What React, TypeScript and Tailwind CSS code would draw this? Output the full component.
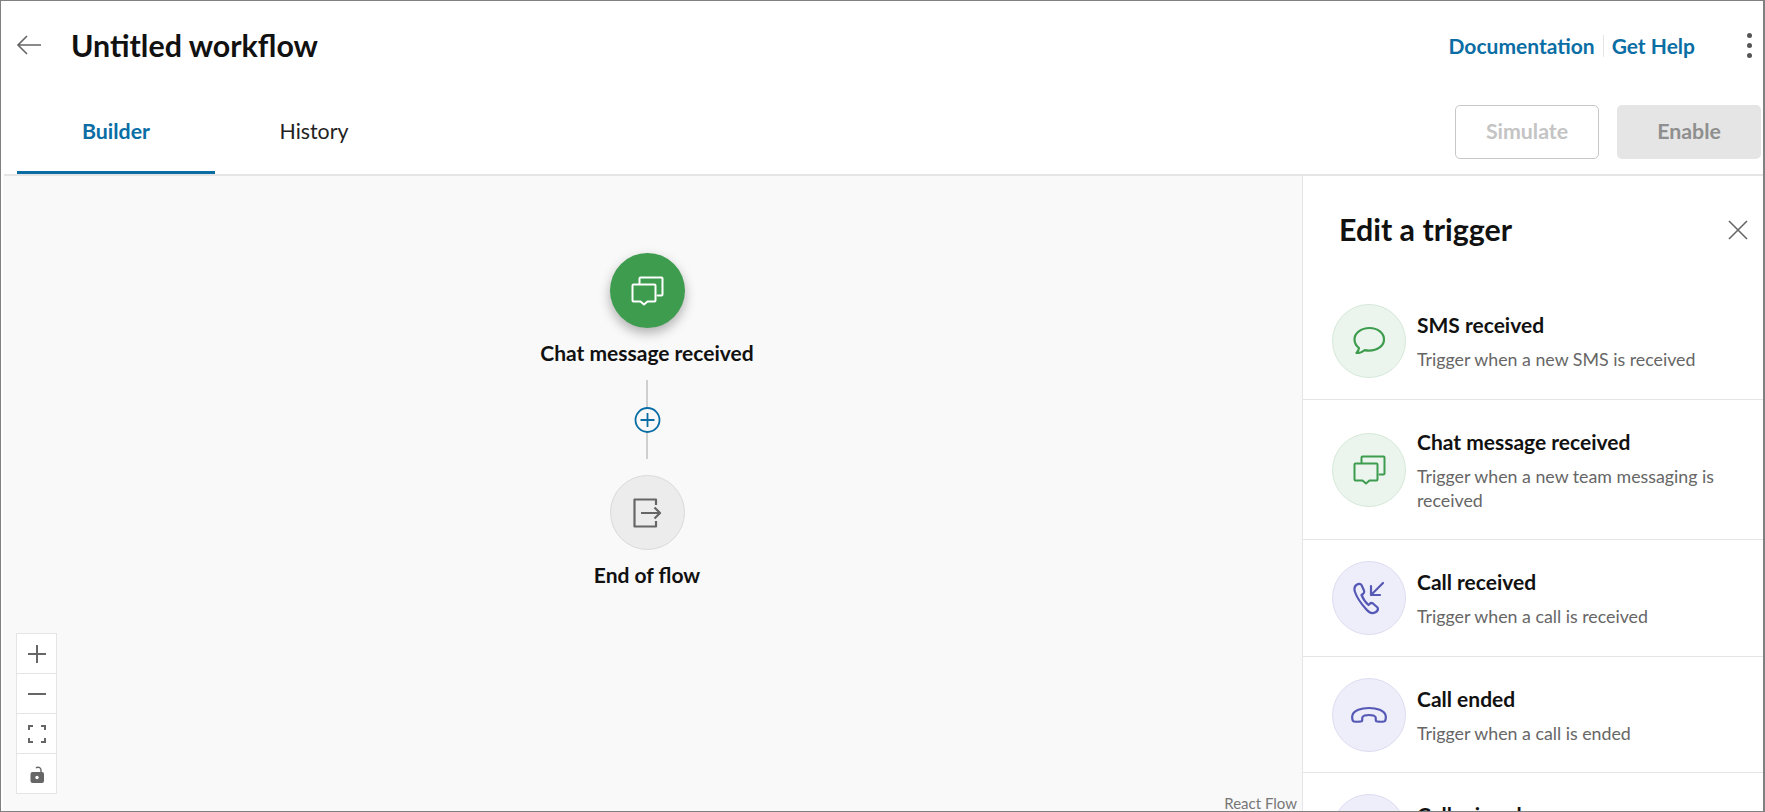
import React from "react";

function ChatsIcon({ color }: { color: string }) {
  return (
    <svg width="33" height="30" viewBox="0 0 33 30" fill="none" stroke={color} strokeWidth="2" strokeLinejoin="round" strokeLinecap="round">
      <path d="M8.500 7.500V2.500q0-1 1-1h21q1 0 1 1v16q0 1-1 1h-4" />
      <path d="M2.500 8.500h21q1 0 1 1v15q0 1-1 1H16.500l-3.500 3-3.500-3H2.500q-1 0-1-1v-15q0-1 1-1z" />
    </svg>
  );
}

function Row({ tone, icon, title, desc, h }: { tone: "green" | "violet"; icon: React.ReactNode; title: string; desc: string; h: string }) {
  return (
    <div className={`flex items-center gap-[11px] border-b border-[#e5e5e5] pl-[29px] pr-[30px] ${h}`}>
      <div className={`flex h-[74px] w-[74px] shrink-0 items-center justify-center rounded-full border ${tone === "green" ? "border-[#d5e8d8] bg-[#ebf5ee]" : "border-[#dcdcf0] bg-[#eeeefb]"}`}>
        {icon}
      </div>
      <div className="min-w-0">
        <div className="text-[21px] font-bold leading-[28px] text-[#111]">{title}</div>
        <div className="mt-[8px] text-[17.8px] leading-[24px] text-[#666]">{desc}</div>
      </div>
    </div>
  );
}

export default function App() {
  return (
    <div className="flex h-[812px] w-[1765px] flex-col overflow-hidden border-[1px] border-r-[2px] border-[#808080] bg-white font-['Lato','Noto_Sans',sans-serif]">
      <header className="flex h-[88px] shrink-0 items-center pl-[15px] pr-[4px]">
        <svg width="26" height="22" viewBox="0 0 26 22" fill="none" stroke="#666" strokeWidth="1.6">
          <path d="M25 11H2M11 2l-9 9 9 9" />
        </svg>
        <h1 className="ml-[29px] mt-[2px] text-[30.4px] font-bold text-[#111]">Untitled workflow</h1>
        <div className="ml-auto mt-[2px] flex items-center text-[21px] font-bold text-[#0a6ea5]">
          <span>Documentation</span>
          <span className="mx-[8px] h-[22px] w-px bg-[#e5e5e5]" />
          <span>Get Help</span>
        </div>
        <div className="ml-[52px] mr-[7px] flex flex-col gap-[5px]">
          <span className="h-[5px] w-[5px] rounded-full bg-[#555]" />
          <span className="h-[5px] w-[5px] rounded-full bg-[#555]" />
          <span className="h-[5px] w-[5px] rounded-full bg-[#555]" />
        </div>
      </header>

      <div className="ml-[3px] flex h-[87px] shrink-0 items-stretch border-b-[2px] border-[#e5e5e5] pl-[13px] pr-[2px]">
        <div className="flex w-[198px] items-center justify-center border-y-[3px] border-t-transparent border-b-[#0a6ea5] text-[21.33px] font-bold text-[#0a6ea5]">Builder</div>
        <div className="flex w-[198px] items-center justify-center pt-[1px] text-[21.33px] text-[#222]">History</div>
        <div className="ml-auto flex items-center gap-[18px] pt-[1px]">
          <div className="flex h-[54px] w-[144px] items-center justify-center rounded-[5px] border border-[#c8c8c8] text-[21.33px] font-bold text-[#c4c4c4]">Simulate</div>
          <div className="flex h-[54px] w-[144px] items-center justify-center rounded-[5px] bg-[#e5e5e5] text-[21.33px] font-bold text-[#8f8f8f]">Enable</div>
        </div>
      </div>

      <div className="flex min-h-0 flex-1">
        <main className="relative ml-[2px] flex flex-1 flex-col items-center bg-[#f9f9f9] pr-[11px]">
          <div className="mt-[77px] flex h-[75px] w-[75px] items-center justify-center rounded-full bg-[#3d9c4e] shadow-[0_5px_12px_rgba(0,0,0,0.3)]">
            <ChatsIcon color="#ffffff" />
          </div>
          <div className="mt-[11px] text-[21px] font-bold leading-[28px] text-[#111]">Chat message received</div>
          <div className="mt-[13px] h-[28px] w-[2px] bg-[#cfcfcf]" />
          <svg className="my-[-2px] translate-x-[0.5px]" width="28" height="28" viewBox="0 0 28 28" fill="none" stroke="#0a6ea5">
            <circle cx="14" cy="14" r="12" strokeWidth="1.8" />
            <path d="M14 7v14M7 14h14" strokeWidth="1.8" />
          </svg>
          <div className="h-[27px] w-[2px] bg-[#cfcfcf]" />
          <div className="mt-[16px] flex h-[75px] w-[75px] items-center justify-center rounded-full border border-[#dadada] bg-[#ececec]">
            <svg width="30" height="32" viewBox="0 0 30 32" fill="none" stroke="#666" strokeWidth="2.2" strokeLinejoin="round">
              <path d="M24 8V2.500H2.500v27H24V24" />
              <path d="M9 16h19M22.500 10.500l5.500 5.500-5.500 5.500" />
            </svg>
          </div>
          <div className="mt-[11px] text-[21px] font-bold leading-[28px] text-[#111]">End of flow</div>

          <div className="absolute bottom-[17px] left-[13px] flex w-[41px] flex-col border border-[#e5e5e5] bg-white">
            <div className="flex h-[40px] items-center justify-center border-b border-[#e5e5e5]">
              <svg width="20" height="20" viewBox="0 0 20 20" stroke="#666" strokeWidth="2"><path d="M10 1v18M1 10h18" /></svg>
            </div>
            <div className="flex h-[40px] items-center justify-center border-b border-[#e5e5e5]">
              <svg width="20" height="20" viewBox="0 0 20 20" stroke="#666" strokeWidth="2"><path d="M1 10h18" /></svg>
            </div>
            <div className="flex h-[40px] items-center justify-center border-b border-[#e5e5e5]">
              <svg width="20" height="20" viewBox="0 0 20 20" fill="none" stroke="#666" strokeWidth="2"><path d="M2 6V2h4M14 2h4v4M18 14v4h-4M6 18H2v-4" /></svg>
            </div>
            <div className="flex h-[39px] items-center justify-center">
              <svg width="20" height="20" viewBox="0 0 20 20" fill="none">
                <path d="M11 5a3 3 0 0 1 5 2v3" stroke="#666" strokeWidth="1.4" transform="translate(-2 -1)" />
                <rect x="3.500" y="8" width="13.500" height="11" rx="2" fill="#666" />
                <circle cx="10" cy="13.500" r="1.700" fill="#fff" />
              </svg>
            </div>
          </div>
          <div className="absolute bottom-0 right-[5px] text-[15px] leading-[15px] text-[#777]">React Flow</div>
        </main>

        <aside className="flex w-[461px] shrink-0 flex-col overflow-hidden border-l border-[#e5e5e5] bg-white">
          <div className="flex h-[107px] shrink-0 items-start justify-between pl-[36px] pr-[14px] pt-[35px]">
            <h2 className="text-[30.4px] font-bold leading-[36px] text-[#111]">Edit a trigger</h2>
            <svg className="mt-[8px]" width="22" height="22" viewBox="0 0 22 22" stroke="#666" strokeWidth="1.6"><path d="M2 2l18 18M20 2L2 20" /></svg>
          </div>
          <Row
            h="h-[117px] shrink-0"
            tone="green"
            title="SMS received"
            desc="Trigger when a new SMS is received"
            icon={
              <svg width="32" height="30" viewBox="0 0 32 30" fill="none" stroke="#3d9c4e" strokeWidth="2.2" strokeLinejoin="round">
                <path d="M16.500 2C8 2 1.500 7 1.500 13.500c0 3.500 2 6.500 4.500 8.500-.3 2-1.200 3.500-2.500 5 3 0 6-1 8-2.800 1.500.3 3 .5 4.500.5 8.500 0 15-5 15-11.200S25 2 16.500 2z" />
              </svg>
            }
          />
          <Row
            h="h-[140px] shrink-0"
            tone="green"
            title="Chat message received"
            desc="Trigger when a new team messaging is received"
            icon={<ChatsIcon color="#3d9c4e" />}
          />
          <Row
            h="h-[117px] shrink-0"
            tone="violet"
            title="Call received"
            desc="Trigger when a call is received"
            icon={
              <svg width="32" height="34" viewBox="0 0 32 34" fill="none" stroke="#5558b5" strokeWidth="2.2" strokeLinejoin="round" strokeLinecap="round">
                <path d="M4 3.500C1.500 5 1 8 2 11c2 6 6.500 12 11 17 2.500 3 6 5 9 3.500 2-1 3.500-3 2.500-5l-4.500-4c-1.500-1-2.500-.5-3.500.5l-1 1c-3-2.500-5.500-6.500-7-10l1.500-1c1-1 1.500-2 1-3.500L8.500 4C7.500 2.500 5.500 2.500 4 3.500z" />
                <path d="M30 2L18 14M18 5v9h9" />
              </svg>
            }
          />
          <Row
            h="h-[116px] shrink-0"
            tone="violet"
            title="Call ended"
            desc="Trigger when a call is ended"
            icon={
              <svg width="36" height="18" viewBox="0 0 36 18" fill="none" stroke="#5558b5" strokeWidth="2.2" strokeLinejoin="round">
                <path d="M18 2C10 2 3 4.500 1.500 9c-.5 2-.5 4 .5 6 .5 1 8 1 9 0 .5-1 0-3 .5-4 1-1.500 4-2 6.500-2s5.500.5 6.500 2c.5 1 0 3 .5 4 1 1 8.500 1 9 0 1-2 1-4 .5-6C33 4.500 26 2 18 2z" />
              </svg>
            }
          />
          <Row
            h="h-[117px] shrink-0"
            tone="violet"
            title="Call missed"
            desc="Trigger when a call is missed"
            icon={null}
          />
        </aside>
      </div>
    </div>
  );
}
